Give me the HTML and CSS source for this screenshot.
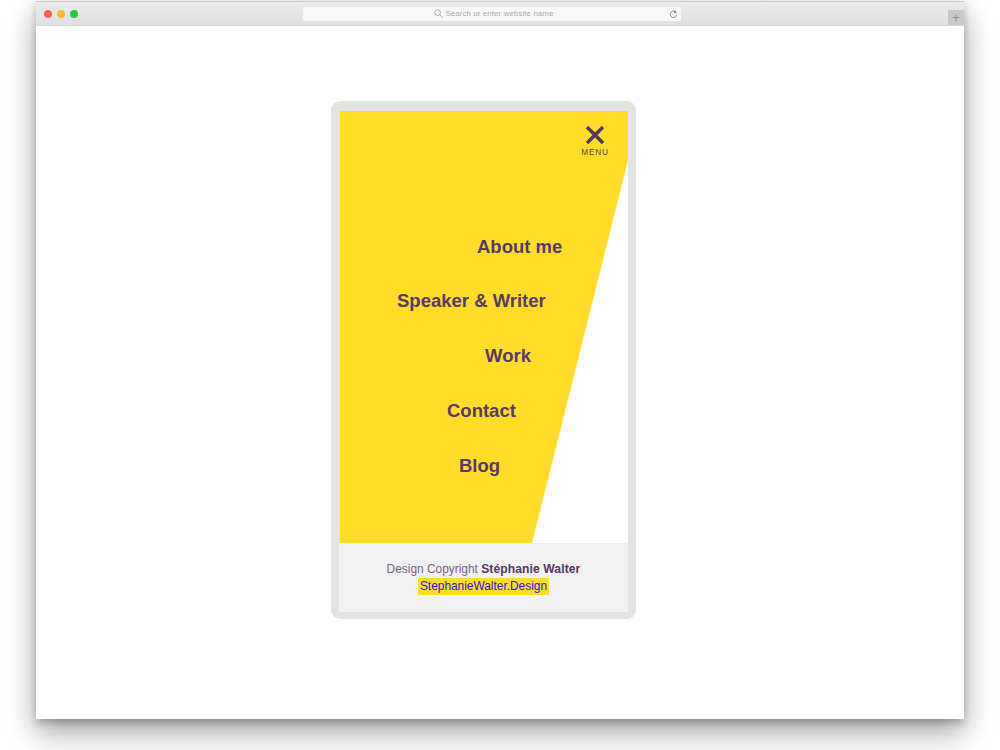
FILE: index.html
```html
<!DOCTYPE html>
<html lang="en">
<head>
<meta charset="utf-8">
<title>Off-canvas menu</title>
<link rel="stylesheet" href="styles.css">
</head>
<body>
<div class="window">
  <header class="toolbar">
    <div class="lights"><span class="light red"></span><span class="light yellow"></span><span class="light green"></span></div>
    <div class="address">
      <div class="address-label">
        <svg class="search-icon" viewBox="0 0 10 10" width="9" height="9"><circle cx="4" cy="4" r="3.2" fill="none" stroke="#8f8f8f" stroke-width=".8"/><path d="M6.4 6.4 9.4 9.4" stroke="#8f8f8f" stroke-width=".9"/></svg>
        <span>Search or enter website name</span>
      </div>
      <svg class="reload" viewBox="0 0 10 10" width="9" height="10"><path d="M7.9 3.2A3.6 3.6 0 1 0 8.6 5.6" fill="none" stroke="#777" stroke-width=".9"/><path d="M6.2 .9 8.4 3.5 5.4 4.1Z" fill="#777"/></svg>
    </div>
    <div class="new-tab">+</div>
  </header>
  <main class="stage">
    <div class="phone">
      <div class="screen">
        <div class="panel">
          <button class="menu-toggle">
            <svg viewBox="0 0 20 20" width="20" height="20"><path d="M2 2 18 18M18 2 2 18" stroke="#54365f" stroke-width="3.4" fill="none"/></svg>
            <span>MENU</span>
          </button>
          <nav class="nav">
            <a class="nav-item about">About me</a>
            <a class="nav-item speaker">Speaker &amp; Writer</a>
            <a class="nav-item work">Work</a>
            <a class="nav-item contact">Contact</a>
            <a class="nav-item blog">Blog</a>
          </nav>
        </div>
        <footer class="credit">
          <p>Design Copyright <strong>Stéphanie Walter</strong></p>
          <p><a class="credit-link">StephanieWalter.Design</a></p>
        </footer>
      </div>
    </div>
  </main>
</div>
</body>
</html>
```
FILE: styles.css
```css
* { box-sizing: border-box; }
html, body { margin: 0; height: 100%; }
body {
  width: 1000px;
  height: 750px;
  overflow: hidden;
  background: #fff;
  padding: 1px 36px 31px 36px;
  font-family: "Liberation Sans", Arial, sans-serif;
}
.window {
  height: 718px;
  display: flex;
  flex-direction: column;
  background: #fff;
  box-shadow: 0 4px 8px rgba(0,0,0,.2), 0 13px 28px rgba(0,0,0,.36);
}
.toolbar {
  height: 25px;
  flex: none;
  display: flex;
  align-items: center;
  padding-left: 8px;
  background: linear-gradient(#ebebec, #e0e0e2);
  border-top: 1px solid #cbcbcb;
  border-bottom: 1px solid #d8d4cf;
}
.lights { display: flex; gap: 5px; width: 259px; }
.light { width: 8px; height: 8px; border-radius: 50%; }
.red { background: #fb6358; }
.yellow { background: #fcbc2e; }
.green { background: #28c83f; }
.address {
  width: 378px;
  height: 14px;
  background: #f8f8f8;
  border-radius: 2px;
  display: flex;
  align-items: center;
  justify-content: center;
  position: relative;
}
.address-label {
  display: flex;
  align-items: center;
  gap: 2px;
  font-size: 7.9px;
  color: #a9a9a9;
  letter-spacing: .1px;
  margin-left: 4px;
}
.reload { position: absolute; right: 3px; top: 2px; }
.new-tab {
  margin-left: auto;
  width: 16px;
  height: 15px;
  align-self: flex-end;
  background: #c9c9c9;
  color: #8d8d8d;
  font-size: 13px;
  line-height: 15px;
  text-align: center;
}
.stage {
  flex: 1;
  padding: 75px 0 0 295px;
  background: #fff;
}
.phone {
  width: 305px;
  height: 518px;
  background: #e3e3e3;
  border-radius: 9px;
  padding: 10px 8px 7px 8px;
}
.screen {
  height: 501px;
  display: flex;
  flex-direction: column;
  background: linear-gradient(to right, #e3e3e3 1px, #fff 1px);
}
.panel {
  height: 432px;
  flex: none;
  padding: 14px 20px 0 0;
  background: #ffdc28;
  clip-path: polygon(1px 0, 100% 0, 100% 49px, 193px 100%, 1px 100%);
  position: relative;
}
.menu-toggle {
  display: flex;
  flex-direction: column;
  align-items: center;
  margin: 0 0 0 auto;
  padding: 0;
  border: 0;
  background: none;
  width: 26px;
  font-family: "Liberation Sans", Arial, sans-serif;
}
.menu-toggle svg { display: block; margin-bottom: 3px; }
.menu-toggle span {
  font-size: 8.2px;
  line-height: 10px;
  letter-spacing: .8px;
  color: #5e4450;
}
.nav {
  margin-top: 77.6px;
  display: flex;
  flex-direction: column;
  gap: 33.8px;
}
.nav-item {
  font-size: 18.5px;
  line-height: 21px;
  font-weight: 700;
  color: #57396a;
}
.about { margin-left: 138px; }
.speaker { margin-left: 58px; }
.work { margin-left: 146px; }
.contact { margin-left: 108px; }
.blog { margin-left: 120px; }
.credit {
  flex: 1;
  background: #f1f1f2;
  padding-top: 18px;
  text-align: center;
  font-size: 11.9px;
  line-height: 17px;
  color: #75637c;
}
.credit p { margin: 0; }
.credit strong { color: #54365f; font-size: 12.1px; letter-spacing: .1px; }
.credit-link {
  display: inline-block;
  padding: 0 2px;
  background: #ffdc28;
  color: #2a14d8;
}
```
